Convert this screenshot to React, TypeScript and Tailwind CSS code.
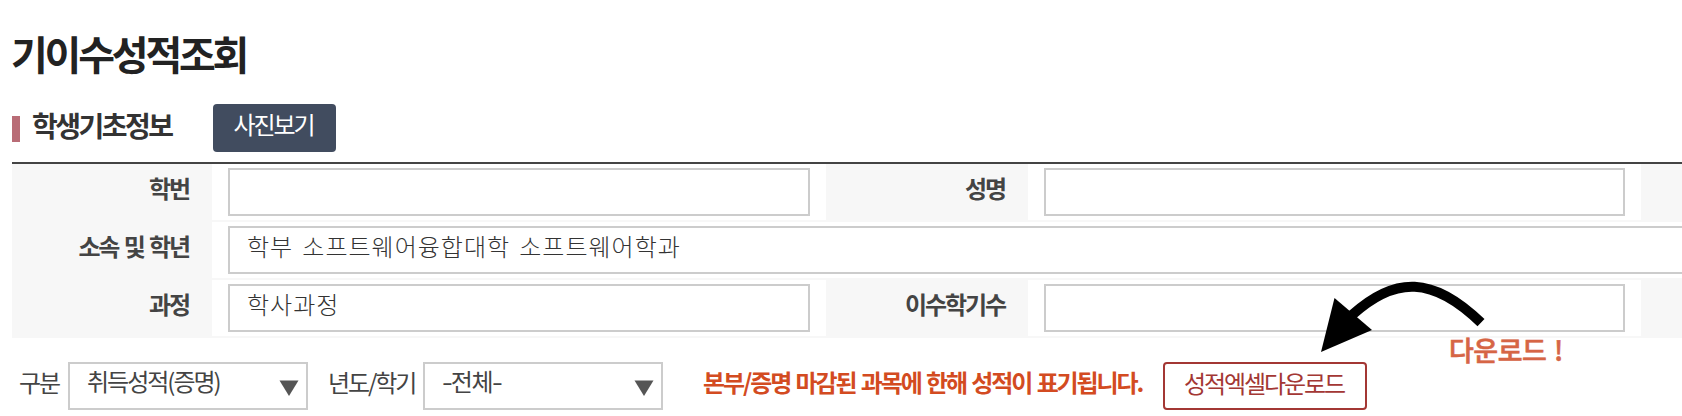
import type { ReactNode } from "react";

function Label({ children, className = "w-[202px]" }: { children?: ReactNode; className?: string }) {
  return (
    <div className={`${className} flex h-[58px] shrink-0 justify-end bg-[#f7f7f7] pt-[6px] pr-[23px] text-2xl leading-[36px] font-bold tracking-[-2.1px] [word-spacing:2px]`}>
      {children}
    </div>
  );
}

function Cell({ children, className }: { children?: ReactNode; className: string }) {
  return (
    <div className={`${className} h-[58px] shrink-0 border-b-2 border-[#f7f7f7] px-4 pt-1`}>
      <div className="h-12 border-2 border-[#cccccc] bg-white pl-[17px] text-2xl leading-[36px] font-light tracking-[1px] whitespace-nowrap text-[#333333] [word-spacing:2.9px]">
        {children}
      </div>
    </div>
  );
}

function Select({ children }: { children: ReactNode }) {
  return (
    <div className="flex h-12 w-[240px] shrink-0 justify-between border-2 border-[#cccccc] pr-[7px] pl-[17px] text-2xl leading-[34px] tracking-[-2px]">
      <span>{children}</span>
      <svg className="mt-[16px] h-4 w-5" viewBox="0 0 20 16">
        <path d="M0.5 0.5H19.5L10 16Z" fill="#555" />
      </svg>
    </div>
  );
}

export default function App() {
  return (
    <div className="relative h-[416px] w-[1682px] overflow-hidden bg-white pl-3 font-['Noto_Sans_CJK_KR',sans-serif] text-[#444444]">
      <h1 className="-ml-px h-[104px] pt-[24px] text-[40px] leading-[58px] font-bold tracking-[-3.2px] text-[#222222]">기이수성적조회</h1>
      <div className="flex h-[58px]">
        <div className="mt-3 h-[26px] w-2 bg-[#b96c76]" />
        <h2 className="w-[193px] pl-3 text-[28px] leading-[42px] font-bold tracking-[-2.5px] text-[#333333]">학생기초정보</h2>
        <button className="h-12 w-[123px] rounded bg-[#414c5f] pr-[2px] pb-[8px] text-2xl leading-[40px] tracking-[-2.1px] text-white">사진보기</button>
      </div>
      <div className="border-t-2 border-[#444444]">
        <div className="flex">
          <Label className="w-[200px]">학번</Label>
          <Cell className="w-[614px]" />
          <Label>성명</Label>
          <Cell className="w-[613px]" />
          <Label />
        </div>
        <div className="flex">
          <Label className="w-[200px]">소속 및 학년</Label>
          <Cell className="w-[1700px]">학부 소프트웨어융합대학 소프트웨어학과</Cell>
        </div>
        <div className="flex">
          <Label className="w-[200px]">과정</Label>
          <Cell className="w-[614px]">학사과정</Cell>
          <Label>이수학기수</Label>
          <Cell className="w-[613px]" />
          <Label />
        </div>
      </div>
      <div className="mt-6 flex text-2xl leading-[40px] tracking-[-2.1px] whitespace-nowrap">
        <span className="w-14 shrink-0 pl-[7px]">구분</span>
        <Select>취득성적(증명)</Select>
        <span className="w-[115px] shrink-0 pl-5">년도/학기</span>
        <Select>
          <span className="inline-block origin-left scale-x-130 tracking-[0.5px]">-</span>
          <span className="tracking-[-1.5px]">전체</span>
          <span className="inline-block origin-left scale-x-130">-</span>
        </Select>
        <strong className="w-[500px] shrink-0 pl-10 font-bold text-[#d34b21] [word-spacing:2px]">본부/증명 마감된 과목에 한해 성적이 표기됩니다.</strong>
        <button className="h-12 w-[204px] shrink-0 rounded border-2 border-[#a33734] pr-[2px] pb-[6px] text-2xl leading-[38px] tracking-[-2.1px] text-[#a33734]">성적엑셀다운로드</button>
      </div>
      <svg className="absolute top-[276px] left-[1316px] h-20 w-[176px]" viewBox="1316 276 176 80">
        <path d="M1352 315C1395 276 1433 276 1481 322.7" fill="none" stroke="#000" strokeWidth="10" />
        <path d="M1334.5 298L1372 330L1321 352Z" />
      </svg>
      <div className="absolute top-[330px] left-[1449px] text-[27px] leading-[40px] font-medium tracking-[-0.5px] whitespace-nowrap text-[#d66545] [-webkit-text-stroke:0.6px_#d66545] [word-spacing:2px]">다운로드 !</div>
    </div>
  );
}
